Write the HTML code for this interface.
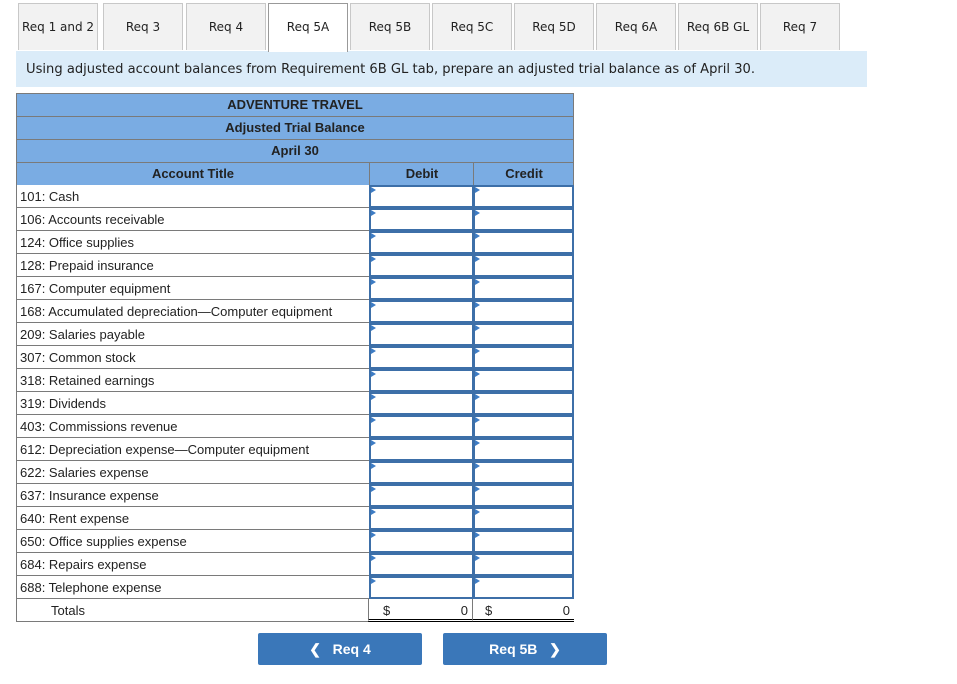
<!DOCTYPE html>
<html><head><meta charset="utf-8"><style>
body{margin:0;background:#fff;width:957px;height:684px;position:relative;font-family:"Liberation Sans",Arial,sans-serif;overflow:hidden}
.tab{position:absolute;top:3px;height:46px;width:78px;background:#f2f2f2;border:1px solid #c8c8c8;border-bottom:none;font-family:"DejaVu Sans",sans-serif;font-size:12px;color:#222;text-align:center;line-height:46px}
.tab.act{background:#fff;border-color:#999;height:48px;z-index:2}
.banner{position:absolute;left:16px;top:51px;width:851px;height:36px;background:#dbecf9;font-family:"DejaVu Sans",sans-serif;font-size:13.1px;line-height:37px;color:#222;text-indent:10px}
.r{position:absolute;left:16px;width:558px;height:23px;box-sizing:border-box;font-size:13px;color:#222}
.h{background:#7aace3;border:1px solid #7a7a7a;border-bottom:none;text-align:center;font-weight:bold;line-height:22px}
.c{position:absolute;top:0;height:23px;box-sizing:border-box;line-height:24px}
.h .c{line-height:22px}
.t{left:0;width:353px;border-left:1px solid #7a7a7a;border-bottom:1px solid #7a7a7a;padding-left:3px;background:#fff}
.in{border:2px solid #3d6fa8;background:#fff}
.in:before{content:"";position:absolute;left:0;top:0;border-left:5px solid #3d7cc4;border-top:3px solid transparent;border-bottom:3px solid transparent}
.d{left:353px;width:105px}
.cr{left:457px;width:101px}
.btn{position:absolute;top:633px;height:32px;width:164px;background:#3a77b9;border-radius:2px;color:#fff;font-weight:bold;font-size:14px;text-align:center;line-height:32px}
</style></head><body>
<div class="tab" style="left:18px">Req 1 and 2</div>
<div class="tab" style="left:103px">Req 3</div>
<div class="tab" style="left:186px">Req 4</div>
<div class="tab act" style="left:268px">Req 5A</div>
<div class="tab" style="left:350px">Req 5B</div>
<div class="tab" style="left:432px">Req 5C</div>
<div class="tab" style="left:514px">Req 5D</div>
<div class="tab" style="left:596px">Req 6A</div>
<div class="tab" style="left:678px">Req 6B GL</div>
<div class="tab" style="left:760px">Req 7</div>
<div class="banner">Using adjusted account balances from Requirement 6B GL tab, prepare an adjusted trial balance as of April 30.</div>

<div class="r h" style="top:93px">ADVENTURE TRAVEL</div>
<div class="r h" style="top:116px">Adjusted Trial Balance</div>
<div class="r h" style="top:139px">April 30</div>
<div class="r h" style="top:162px;padding:0">
<div class="c" style="left:0;width:352px">Account Title</div>
<div class="c" style="left:352px;width:105px;border-left:1px solid #7a7a7a">Debit</div>
<div class="c" style="left:456px;width:101px;border-left:1px solid #7a7a7a">Credit</div>
</div>
<div id="rows"></div>
<script>
var a=["101: Cash","106: Accounts receivable","124: Office supplies","128: Prepaid insurance","167: Computer equipment","168: Accumulated depreciation\u2014Computer equipment","209: Salaries payable","307: Common stock","318: Retained earnings","319: Dividends","403: Commissions revenue","612: Depreciation expense\u2014Computer equipment","622: Salaries expense","637: Insurance expense","640: Rent expense","650: Office supplies expense","684: Repairs expense","688: Telephone expense"];
var h="";a.forEach(function(s,i){h+='<div class="r" style="top:'+(185+23*i)+'px"><div class="c t">'+s+'</div><div class="c d in"></div><div class="c cr in"></div></div>';});
h+='<div class="r" style="top:599px"><div class="c t" style="padding-left:34px">Totals</div><div class="c d" style="border-left:1px solid #7a7a7a;border-bottom:3px double #000;padding:0 4px 0 14px;width:104px;left:352px"><span>$</span><span style="float:right">0</span></div><div class="c cr" style="border-left:1px solid #7a7a7a;border-bottom:3px double #000;padding:0 4px 0 12px;width:102px;left:456px"><span>$</span><span style="float:right">0</span></div></div>';
document.getElementById("rows").innerHTML=h;
</script>
<div class="btn" style="left:258px">&#10094;&nbsp;&nbsp; Req 4</div>
<div class="btn" style="left:443px">Req 5B &nbsp;&nbsp;&#10095;</div>
</body></html>
